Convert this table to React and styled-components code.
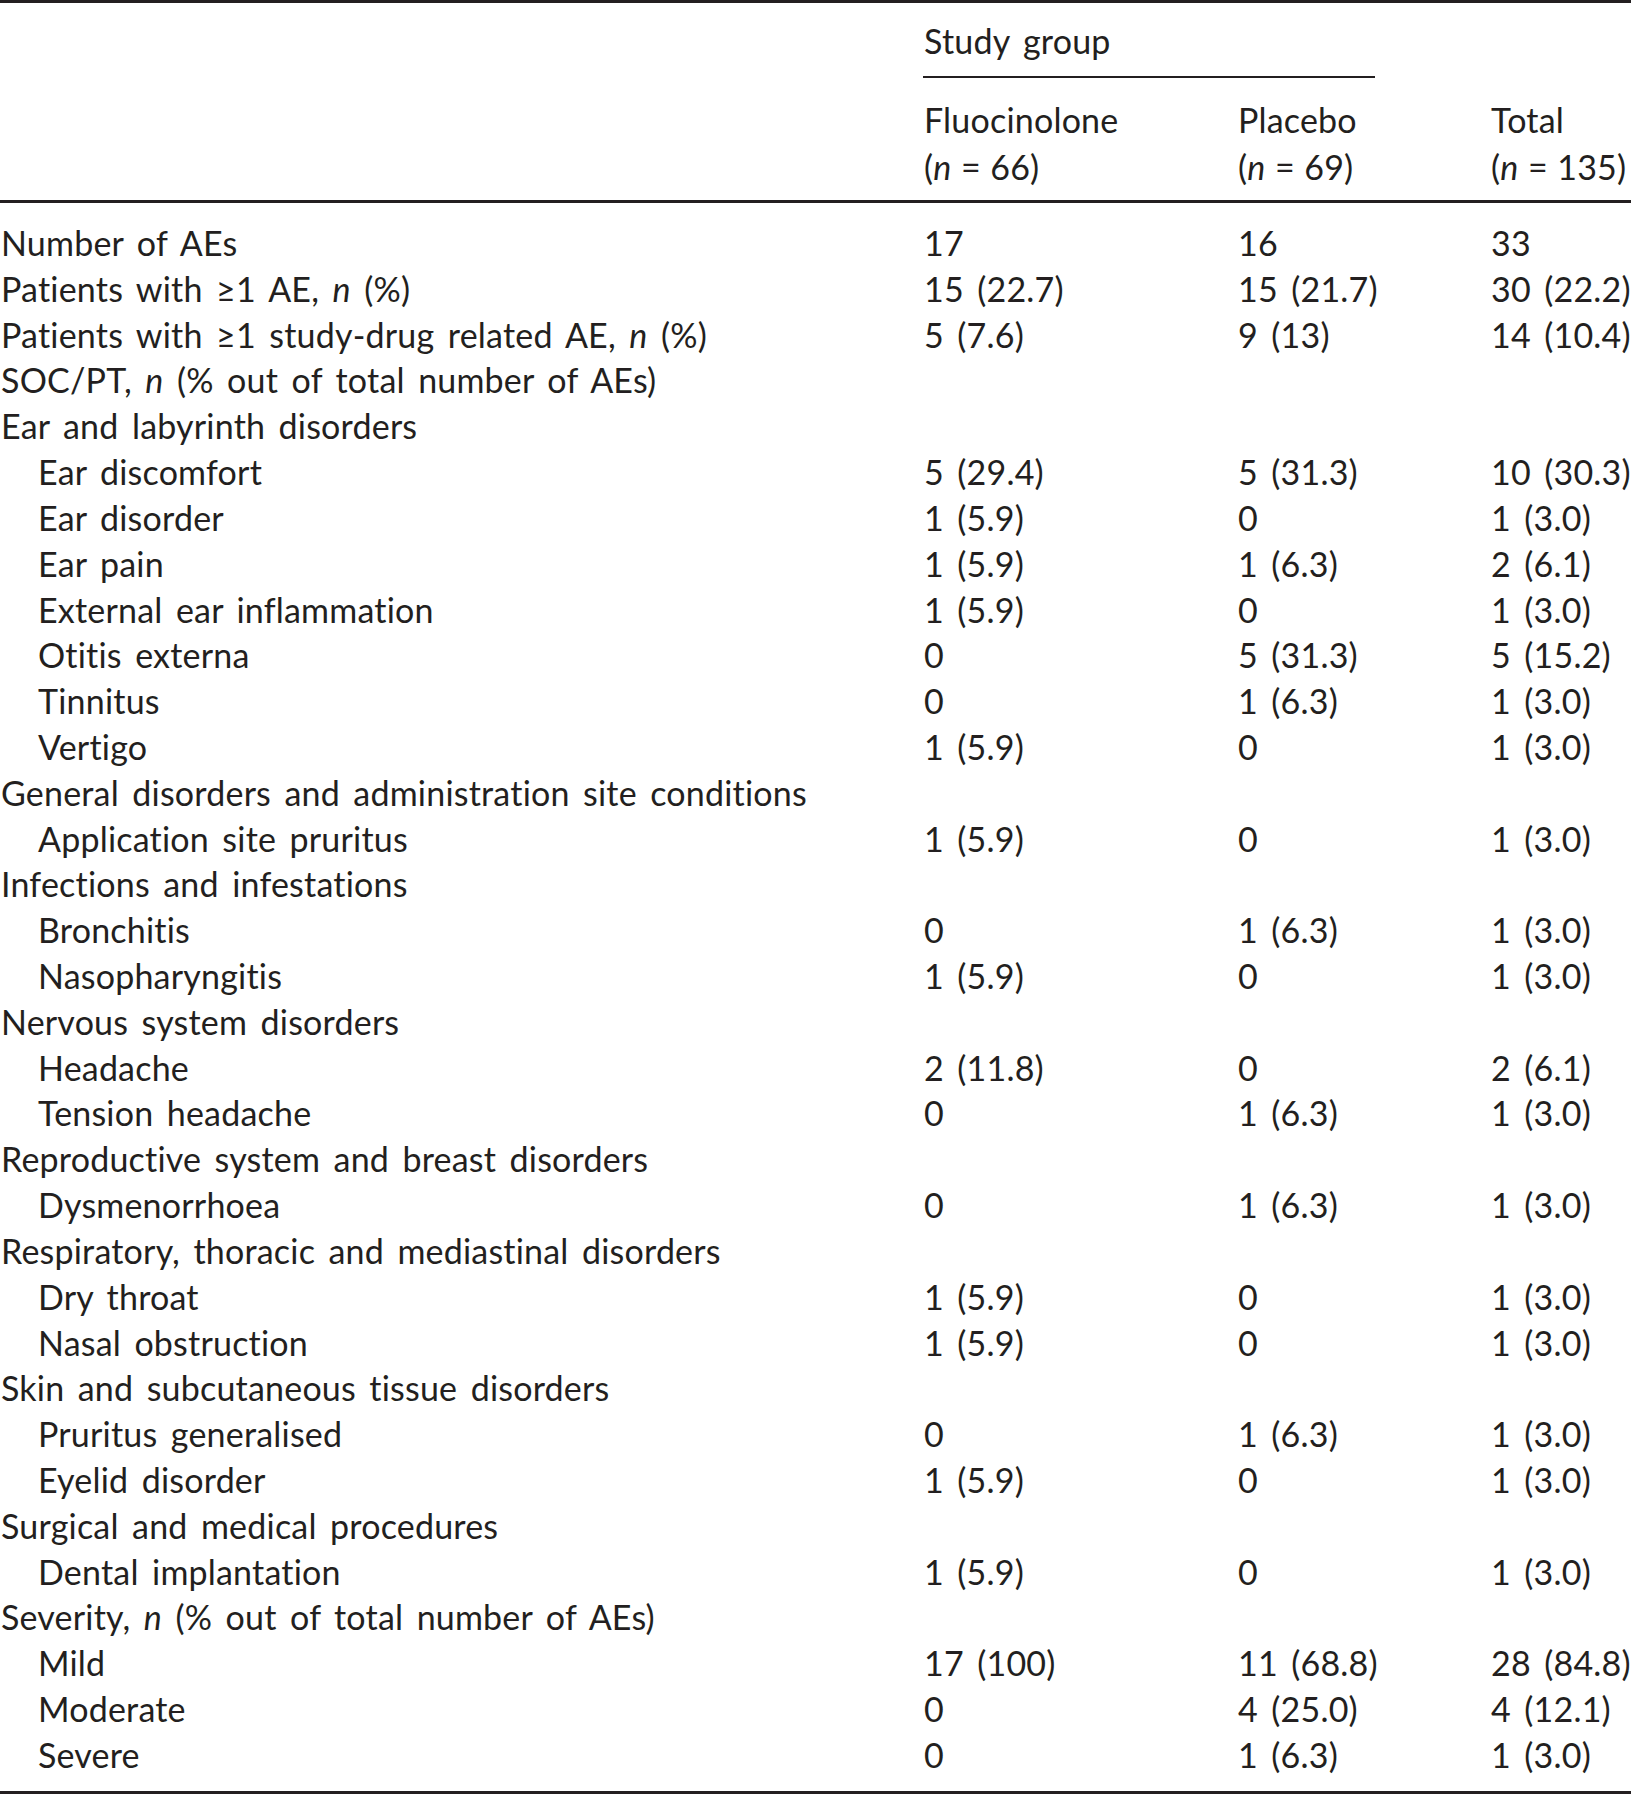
import React from "react"
import styled, { createGlobalStyle } from "styled-components"

const GlobalStyle = createGlobalStyle`
  html, body {
    margin: 0;
    padding: 0;
    background: #ffffff;
  }
  body {
    font-family: Lato, "Open Sans", "DejaVu Sans", sans-serif;
    color: #231f20;
  }
`

const ROW_H = 45.82

const rows = [
  { label: "Number of AEs", v: ["17", "16", "33"] },
  { label: <>Patients with ≥1 AE, <i>n</i> (%)</>, v: ["15 (22.7)", "15 (21.7)", "30 (22.2)"] },
  {
    label: <>Patients with ≥1 study-drug related AE, <i>n</i> (%)</>,
    v: ["5 (7.6)", "9 (13)", "14 (10.4)"],
  },
  { label: <>SOC/PT, <i>n</i> (% out of total number of AEs)</> },
  { label: "Ear and labyrinth disorders" },
  { label: "Ear discomfort", sub: true, v: ["5 (29.4)", "5 (31.3)", "10 (30.3)"] },
  { label: "Ear disorder", sub: true, v: ["1 (5.9)", "0", "1 (3.0)"] },
  { label: "Ear pain", sub: true, v: ["1 (5.9)", "1 (6.3)", "2 (6.1)"] },
  { label: "External ear inflammation", sub: true, v: ["1 (5.9)", "0", "1 (3.0)"] },
  { label: "Otitis externa", sub: true, v: ["0", "5 (31.3)", "5 (15.2)"] },
  { label: "Tinnitus", sub: true, v: ["0", "1 (6.3)", "1 (3.0)"] },
  { label: "Vertigo", sub: true, v: ["1 (5.9)", "0", "1 (3.0)"] },
  { label: "General disorders and administration site conditions" },
  { label: "Application site pruritus", sub: true, v: ["1 (5.9)", "0", "1 (3.0)"] },
  { label: "Infections and infestations" },
  { label: "Bronchitis", sub: true, v: ["0", "1 (6.3)", "1 (3.0)"] },
  { label: "Nasopharyngitis", sub: true, v: ["1 (5.9)", "0", "1 (3.0)"] },
  { label: "Nervous system disorders" },
  { label: "Headache", sub: true, v: ["2 (11.8)", "0", "2 (6.1)"] },
  { label: "Tension headache", sub: true, v: ["0", "1 (6.3)", "1 (3.0)"] },
  { label: "Reproductive system and breast disorders" },
  { label: "Dysmenorrhoea", sub: true, v: ["0", "1 (6.3)", "1 (3.0)"] },
  { label: "Respiratory, thoracic and mediastinal disorders" },
  { label: "Dry throat", sub: true, v: ["1 (5.9)", "0", "1 (3.0)"] },
  { label: "Nasal obstruction", sub: true, v: ["1 (5.9)", "0", "1 (3.0)"] },
  { label: "Skin and subcutaneous tissue disorders" },
  { label: "Pruritus generalised", sub: true, v: ["0", "1 (6.3)", "1 (3.0)"] },
  { label: "Eyelid disorder", sub: true, v: ["1 (5.9)", "0", "1 (3.0)"] },
  { label: "Surgical and medical procedures" },
  { label: "Dental implantation", sub: true, v: ["1 (5.9)", "0", "1 (3.0)"] },
  { label: <>Severity, <i>n</i> (% out of total number of AEs)</> },
  { label: "Mild", sub: true, v: ["17 (100)", "11 (68.8)", "28 (84.8)"] },
  { label: "Moderate", sub: true, v: ["0", "4 (25.0)", "4 (12.1)"] },
  { label: "Severe", sub: true, v: ["0", "1 (6.3)", "1 (3.0)"] },
]

const groups = [
  { name: "Fluocinolone", n: 66 },
  { name: "Placebo", n: 69 },
  { name: "Total", n: 135 },
]

const Table = styled.div`
  width: 1631px;
  font-size: 34px;
  letter-spacing: 0.2px;
  word-spacing: 4.5px;
  white-space: nowrap;
`

const Rule = styled.div`
  height: ${(p) => (p.$thick ? 3 : 2)}px;
  background: #231f20;
  margin-top: ${(p) => p.$gap || 0}px;
  margin-left: ${(p) => p.$left || 0}px;
  width: ${(p) => (p.$width ? `${p.$width}px` : "auto")};
`

const Grid = styled.div`
  display: grid;
  grid-template-columns: 923px 314px 253px 1fr;
  align-items: center;
  margin-top: ${(p) => p.$gap || 0}px;
  height: ${(p) => p.$h || ROW_H}px;
  line-height: ${(p) => p.$lh || ROW_H}px;
`

const Cell = styled.div`
  padding-left: ${(p) => (p.$sub ? 38 : 1)}px;
  grid-column: ${(p) => p.$span || "auto"};
`

const Count = styled.span`
  word-spacing: 0.5px;
`

const Body = styled.div`
  padding-top: 17.2px;
`

export default function App() {
  return (
    <>
      <GlobalStyle />
      <Table>
        <Rule $thick />
        <Grid $gap={15}>
          <Cell />
          <Cell $span="2 / span 2">Study group</Cell>
        </Grid>
        <Rule $gap={12} $left={923} $width={452} />
        <Grid $gap={18.5} $h={94} $lh={47}>
          <Cell />
          {groups.map((g) => (
            <Cell key={g.name}>
              {g.name}
              <br />
              <Count>
                (<i>n</i> = {g.n})
              </Count>
            </Cell>
          ))}
        </Grid>
        <Rule $thick $gap={9.5} />
        <Body>
          {rows.map((r, i) => (
            <Grid key={i}>
              <Cell $sub={r.sub}>{r.label}</Cell>
              {(r.v || ["", "", ""]).map((v, j) => (
                <Cell key={j}>{v}</Cell>
              ))}
            </Grid>
          ))}
        </Body>
        <Rule $thick $gap={13} />
      </Table>
    </>
  )
}
